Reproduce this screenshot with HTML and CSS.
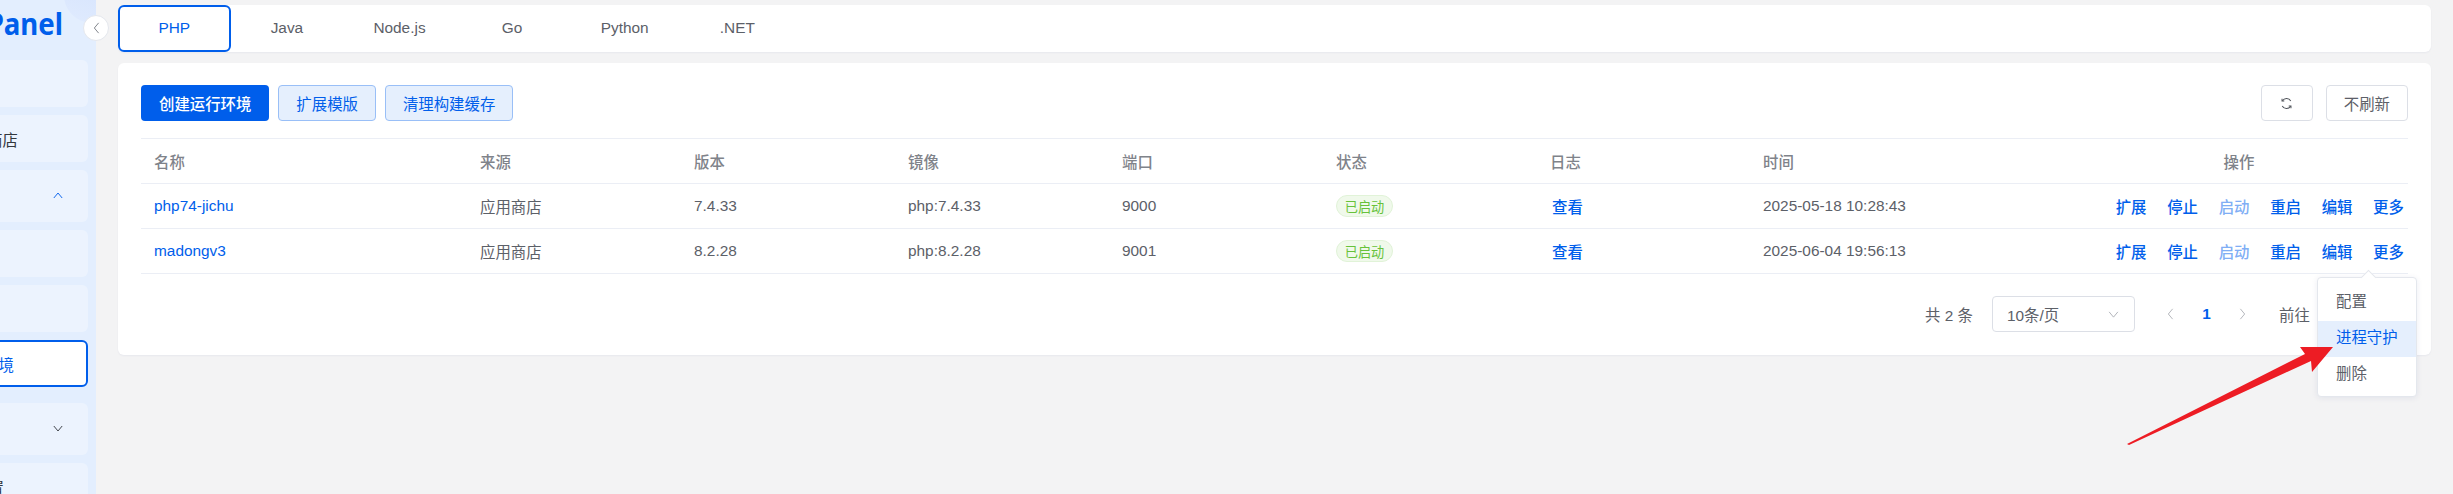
FILE: index.html
```html
<!DOCTYPE html>
<html lang="zh-CN">
<head>
  <meta charset="UTF-8" />
  <title>运行环境</title>
  <link rel="stylesheet" href="styles.css">
</head>
<body>
  <div class="layout">
    <aside class="sidebar">
      <div class="logo-circle"></div>
      <div class="logo">Panel</div>
      <ul class="menu">
        <li class="menu-item"></li>
        <li class="menu-item"><span>应用商店</span></li>
        <li class="menu-item tall">
          <svg class="menu-arrow up" viewBox="0 0 12 8"><path d="M1 7l5-6 5 6" /></svg>
        </li>
        <li class="menu-item"></li>
        <li class="menu-item"></li>
        <li class="menu-item active"><span>运行环境</span></li>
        <li class="menu-item tall">
          <svg class="menu-arrow" viewBox="0 0 12 8"><path d="M1 1l5 6 5-6" /></svg>
        </li>
        <li class="menu-item last"><span>面板设置</span></li>
      </ul>
    </aside>

    <div class="collapse-btn">
      <svg viewBox="0 0 8 14"><path d="M6.5 1L1.5 7l5 6" /></svg>
    </div>

    <main class="main">
      <nav class="tabs">
        <a class="tab current">PHP</a>
        <a class="tab">Java</a>
        <a class="tab">Node.js</a>
        <a class="tab">Go</a>
        <a class="tab">Python</a>
        <a class="tab">.NET</a>
      </nav>

      <section class="card">
        <div class="toolbar">
          <button class="btn primary">创建运行环境</button>
          <button class="btn plain">扩展模版</button>
          <button class="btn plain">清理构建缓存</button>
          <div class="toolbar-right">
            <button class="btn ghost refresh">
              <svg viewBox="0 0 14 14"><path d="M11.6 4.2A5.2 5.2 0 0 0 2.6 4M2.4 9.8a5.2 5.2 0 0 0 9 .2" /><path d="M2.2 1.8V4.3h2.4M11.8 12.2V9.7H9.4" /></svg>
            </button>
            <button class="btn ghost">不刷新</button>
          </div>
        </div>

        <table class="table">
          <colgroup>
            <col class="c-name"><col class="c-std"><col class="c-std"><col class="c-std">
            <col class="c-std"><col class="c-std"><col class="c-time"><col class="c-ops">
          </colgroup>
          <thead>
            <tr>
              <th>名称</th><th>来源</th><th>版本</th><th>镜像</th><th>端口</th><th>状态</th><th>日志</th><th>时间</th><th class="center">操作</th>
            </tr>
          </thead>
          <tbody>
            <tr>
              <td><a class="link">php74-jichu</a></td>
              <td>应用商店</td><td>7.4.33</td><td>php:7.4.33</td><td>9000</td>
              <td><span class="tag">已启动</span></td>
              <td><a class="link strong log">查看</a></td>
              <td>2025-05-18 10:28:43</td>
              <td class="ops">
                <a class="link strong">扩展</a><a class="link strong">停止</a><a class="link strong off">启动</a><a class="link strong">重启</a><a class="link strong">编辑</a><a class="link strong">更多</a>
              </td>
            </tr>
            <tr>
              <td><a class="link">madongv3</a></td>
              <td>应用商店</td><td>8.2.28</td><td>php:8.2.28</td><td>9001</td>
              <td><span class="tag">已启动</span></td>
              <td><a class="link strong log">查看</a></td>
              <td>2025-06-04 19:56:13</td>
              <td class="ops">
                <a class="link strong">扩展</a><a class="link strong">停止</a><a class="link strong off">启动</a><a class="link strong">重启</a><a class="link strong">编辑</a><a class="link strong">更多</a>
              </td>
            </tr>
          </tbody>
        </table>

        <div class="pager">
          <span class="total">共 2 条</span>
          <div class="select">
            <span>10条/页</span>
            <svg viewBox="0 0 12 8"><path d="M1 1l5 6 5-6" /></svg>
          </div>
          <svg class="pager-arrow" viewBox="0 0 8 14"><path d="M6.5 1L1.5 7l5 6" /></svg>
          <span class="page-num">1</span>
          <svg class="pager-arrow" viewBox="0 0 8 14"><path d="M1.5 1l5 6-5 6" /></svg>
          <span class="jump">前往</span>
        </div>
      </section>
    </main>
  </div>

  <div class="dropdown">
    <div class="dropdown-item">配置</div>
    <div class="dropdown-item hover">进程守护</div>
    <div class="dropdown-item">删除</div>
  </div>

  <svg class="callout" viewBox="0 0 2453 494">
    <polygon points="2127,444 2305,354 2300,347 2333,347 2312,372 2311,361 2129,445" />
  </svg>
</body>
</html>
```

FILE: styles.css
```css
* {
  box-sizing: border-box;
}

html,
body {
  margin: 0;
  height: 494px;
  overflow: hidden;
}

body {
  font-family: "Liberation Sans", "Noto Sans CJK SC", sans-serif;
  font-size: 15.4px;
  color: #5c6068;
  background: #f3f3f4;
}

.layout {
  display: flex;
  height: 494px;
}

/* sidebar */
.sidebar {
  position: relative;
  flex: 0 0 96px;
  overflow: hidden;
  background: #e3eefe;
}

.logo-circle {
  position: absolute;
  top: -33px;
  left: 64px;
  width: 56px;
  height: 56px;
  border-radius: 50%;
  background: linear-gradient(200deg, #d2e1fd, #e0ebfe);
}

.logo {
  position: absolute;
  top: 4px;
  right: 33px;
  font-family: "Noto Sans", sans-serif;
  font-size: 30px;
  line-height: 40px;
  font-weight: 700;
  color: #005eeb;
  transform: scaleX(0.92);
  transform-origin: right center;
}

.menu {
  list-style: none;
  margin: 0;
  padding: 60px 0 0;
  display: flex;
  flex-direction: column;
  gap: 8px;
}

.menu-item {
  display: flex;
  align-items: center;
  justify-content: flex-end;
  flex: none;
  margin-left: -20px;
  width: 108px;
  height: 47px;
  padding-right: 70px;
  white-space: nowrap;
  color: #33373d;
  background: #ecf3fe;
  border-radius: 6px;
  position: relative;
}

.menu-item.tall {
  height: 52px;
}

.menu-item.active {
  margin-bottom: 8px;
  padding-right: 72px;
  color: #005eeb;
  background: #fff;
  border: 2px solid #005eeb;
}

.menu-item.last {
  padding-right: 84px;
  height: 47px;
}

.menu-arrow {
  position: absolute;
  right: 25px;
  top: 50%;
  margin-top: -4px;
  width: 10px;
  height: 7px;
  fill: none;
  stroke: #33373d;
  stroke-width: 1.1;
}

.menu-arrow.up {
  stroke: #005eeb;
}

.collapse-btn {
  position: absolute;
  left: 83px;
  top: 15px;
  width: 26px;
  height: 26px;
  display: flex;
  align-items: center;
  justify-content: center;
  background: #fff;
  border: 1px solid #e4e7ed;
  border-radius: 50%;
}

.collapse-btn svg {
  width: 7px;
  height: 12px;
  fill: none;
  stroke: #6d7178;
  stroke-width: 1;
}

/* main */
.main {
  flex: 1;
  min-width: 0;
  padding: 5px 22px 0;
}

.tabs {
  display: flex;
  height: 47px;
  background: #fff;
  border-radius: 6px;
  box-shadow: 0 1px 2px rgba(0, 40, 120, 0.05);
}

.tab {
  flex: 0 0 112.6px;
  display: flex;
  align-items: center;
  justify-content: center;
  padding-bottom: 2px;
}

.tab.current {
  color: #005eeb;
  border: 2px solid #005eeb;
  border-radius: 6px;
}

.card {
  height: 292px;
  margin-top: 11px;
  padding: 22px 23px;
  background: #fff;
  border-radius: 6px;
  box-shadow: 0 1px 2px rgba(0, 40, 120, 0.05);
}

.toolbar {
  display: flex;
  gap: 9px;
  height: 36px;
}

.toolbar-right {
  display: flex;
  gap: 13px;
  margin-left: auto;
}

.btn {
  height: 36px;
  padding: 0 17px;
  font: inherit;
  border-radius: 4px;
  border: 1px solid transparent;
}

.btn.primary {
  color: #fff;
  font-weight: 500;
  background: #005eeb;
}

.btn.plain {
  color: #005eeb;
  background: #e5effd;
  border-color: #99bff7;
}

.btn.ghost {
  color: #5c6068;
  background: #fff;
  border-color: #dcdfe6;
}

.btn.refresh {
  width: 52px;
  padding: 0;
  display: flex;
  align-items: center;
  justify-content: center;
}

.refresh svg {
  width: 13px;
  height: 13px;
  fill: none;
  stroke: #4c5057;
  stroke-width: 1.1;
}

.table {
  width: 2267px;
  margin-top: 17px;
  table-layout: fixed;
  border-collapse: collapse;
  border-top: 1px solid #ebeef5;
}

.c-name { width: 326px; }
.c-std { width: 214px; }
.c-time { width: 213px; }
.c-ops { width: 320px; }

.table th,
.table td {
  height: 45px;
  padding: 0 13px;
  text-align: left;
  font-weight: 400;
  white-space: nowrap;
  border-bottom: 1px solid #ebeef5;
}

.table th {
  color: #7f838a;
  font-weight: 500;
}

.table th.center {
  text-align: center;
}

.link {
  color: #005eeb;
}

.link.strong {
  font-weight: 500;
}

.link.log {
  margin-left: 2px;
}

.link.off {
  color: #80aef5;
}

.table td.ops {
  padding: 0 25px;
  text-align: right;
  font-size: 0;
}

.ops .link {
  font-size: 15.4px;
  margin-left: 20.7px;
}

.tag {
  display: inline-flex;
  align-items: center;
  justify-content: center;
  width: 57px;
  height: 22px;
  vertical-align: middle;
  font-size: 13.2px;
  color: #67c23a;
  background: #f0f9eb;
  border: 1px solid #e1f3d8;
  border-radius: 11px;
}

.pager {
  display: flex;
  align-items: center;
  height: 36px;
  margin-top: 22px;
  padding-left: 1784px;
}

.total {
  width: 67px;
}

.select {
  display: flex;
  align-items: center;
  justify-content: space-between;
  width: 143px;
  height: 36px;
  padding: 0 15px 0 14px;
  border: 1px solid #dcdfe6;
  border-radius: 4px;
}

.select svg {
  width: 11px;
  height: 7px;
  fill: none;
  stroke: #a8abb2;
  stroke-width: 1;
}

.pager-arrow {
  flex: none;
  width: 7px;
  height: 12px;
  fill: none;
  stroke: #a8abb2;
  stroke-width: 1;
}

.select + .pager-arrow {
  margin-left: 32px;
}

.page-num {
  width: 65px;
  text-align: center;
  color: #005eeb;
  font-weight: 700;
}

.jump {
  margin-left: 33px;
}

/* open "more" menu and the arrow drawn over the screenshot */
.dropdown {
  position: absolute;
  left: 2317px;
  top: 277px;
  width: 100px;
  height: 120px;
  padding: 7px 0;
  background: #fff;
  border: 1px solid #e4e7ed;
  border-radius: 4px;
  box-shadow: 0 1px 6px rgba(0, 40, 120, 0.08);
}

.dropdown::before {
  content: "";
  position: absolute;
  top: -6px;
  left: 45px;
  width: 10px;
  height: 10px;
  background: #fff;
  border-left: 1px solid #e4e7ed;
  border-top: 1px solid #e4e7ed;
  transform: rotate(45deg);
}

.dropdown-item {
  position: relative;
  height: 36px;
  line-height: 34px;
  padding-left: 18px;
  white-space: nowrap;
}

.dropdown-item.hover {
  color: #005eeb;
  background: #e5effd;
}

.callout {
  position: absolute;
  left: 0;
  top: 0;
  width: 2453px;
  height: 494px;
  pointer-events: none;
}

.callout polygon {
  fill: #ed1c24;
}
```
